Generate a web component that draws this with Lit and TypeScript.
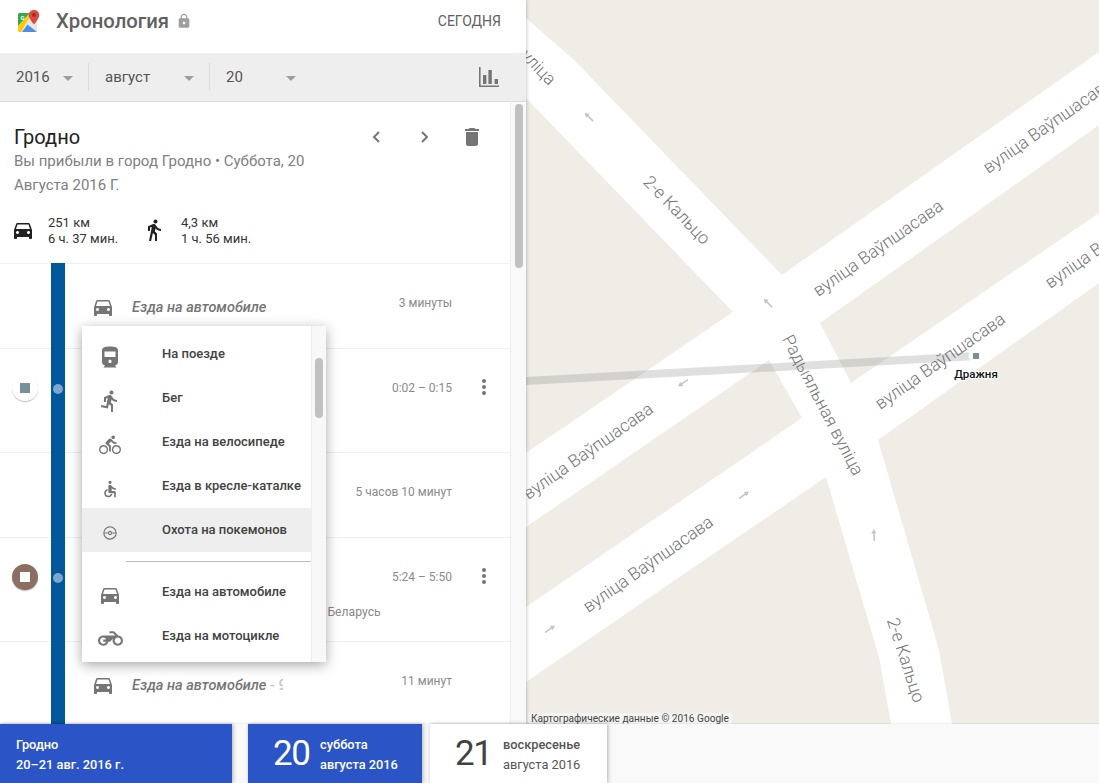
import { LitElement, html, css, svg } from 'lit';
import { customElement } from 'lit/decorators.js';

const P = {
  car: 'M18.92 6.01C18.72 5.42 18.16 5 17.5 5h-11c-.66 0-1.21.42-1.42 1.01L3 12v8c0 .55.45 1 1 1h1c.55 0 1-.45 1-1v-1h12v1c0 .55.45 1 1 1h1c.55 0 1-.45 1-1v-8l-2.08-5.99zM6.5 16c-.83 0-1.5-.67-1.5-1.5S5.67 13 6.5 13s1.5.67 1.5 1.5S7.33 16 6.5 16zm11 0c-.83 0-1.5-.67-1.5-1.5s.67-1.5 1.5-1.5 1.5.67 1.5 1.5-.67 1.5-1.5 1.5zM5 11l1.5-4.5h11L19 11H5z',
  walk: 'M13.5 5.5c1.1 0 2-.9 2-2s-.9-2-2-2-2 .9-2 2 .9 2 2 2zM9.8 8.9L7 23h2.1l1.8-8 2.1 2v6h2v-7.5l-2.1-2 .6-3C14.8 12 16.8 13 19 13v-2c-1.9 0-3.5-1-4.3-2.4l-1-1.6c-.4-.6-1-1-1.7-1-.3 0-.5.1-.8.1L6 8.3V13h2V9.6l1.8-.7',
  run: 'M13.49 5.48c1.1 0 2-.9 2-2s-.9-2-2-2-2 .9-2 2 .9 2 2 2zm-3.6 13.9l1-4.4 2.1 2v6h2v-7.5l-2.1-2 .6-3c1.3 1.5 3.3 2.5 5.5 2.5v-2c-1.9 0-3.5-1-4.3-2.4l-1-1.6c-.4-.6-1-1-1.7-1-.3 0-.5.1-.8.1l-5.2 2.2v4.7h2v-3.4l1.8-.7-1.6 8.1-4.9-1-.4 2 7 1.4z',
  bike: 'M15.5 5.5c1.1 0 2-.9 2-2s-.9-2-2-2-2 .9-2 2 .9 2 2 2zM5 12c-2.8 0-5 2.2-5 5s2.2 5 5 5 5-2.2 5-5-2.2-5-5-5zm0 8.5c-1.9 0-3.5-1.6-3.5-3.5s1.6-3.5 3.5-3.5 3.5 1.6 3.5 3.5-1.6 3.5-3.5 3.5zm5.8-10l2.4-2.4.8.8c1.3 1.3 3 2.1 5.1 2.1V9c-1.5 0-2.7-.6-3.6-1.5l-1.9-1.9c-.5-.4-1-.6-1.6-.6s-1.1.2-1.4.6L7.8 8.4c-.4.4-.6.9-.6 1.4 0 .6.2 1.1.6 1.4L11 14v5h2v-6.2l-2.2-2.3zM19 12c-2.8 0-5 2.2-5 5s2.2 5 5 5 5-2.2 5-5-2.2-5-5-5zm0 8.5c-1.9 0-3.5-1.6-3.5-3.5s1.6-3.5 3.5-3.5 3.5 1.6 3.5 3.5-1.6 3.5-3.5 3.5z',
  train: 'M12 1.5c-4.5 0-8 .6-8 4V17c0 1.9 1.3 3.2 3 3.4L5.5 22.5h13L17 20.4c1.7-.2 3-1.5 3-3.4V5.5c0-3.4-3.5-4-8-4zM6.5 6.5h11V12h-11V6.5zM12 18c-.9 0-1.6-.7-1.6-1.6s.7-1.6 1.6-1.6 1.6.7 1.6 1.6-.7 1.6-1.6 1.6z',
  wheel: 'M12 2a2 2 0 1 0 0 4 2 2 0 0 0 0-4zM19 13v-2c-1.54.02-3.09-.75-4.07-1.83l-1.29-1.43c-.17-.19-.38-.34-.61-.45-.01 0-.01-.01-.02-.01H13c-.35-.2-.75-.3-1.19-.26C10.76 7.11 10 8.04 10 9.09V15c0 1.1.9 2 2 2h5v5h2v-5.5c0-1.1-.9-2-2-2h-3v-3.45c1.29 1.07 3.25 1.94 5 1.95zm-6.17 5c-.41 1.16-1.52 2-2.83 2-1.66 0-3-1.34-3-3 0-1.31.84-2.41 2-2.83V12.1c-2.28.46-4 2.48-4 4.9 0 2.76 2.24 5 5 5 2.42 0 4.44-1.72 4.9-4h-2.07z',
  moto: 'M19.44 9.03L15.41 5H11v2h3.59l2 2H5c-2.8 0-5 2.2-5 5s2.2 5 5 5c2.46 0 4.45-1.69 4.9-4h1.65l2.77-2.77c-.21.54-.32 1.14-.32 1.77 0 2.8 2.2 5 5 5s5-2.2 5-5c0-2.65-1.97-4.77-4.56-4.97zM7.82 15C7.4 16.15 6.28 17 5 17c-1.63 0-3-1.37-3-3s1.37-3 3-3c1.28 0 2.4.85 2.82 2H5v2h2.82zM19 17c-1.66 0-3-1.34-3-3s1.34-3 3-3 3 1.34 3 3-1.34 3-3 3z',
  poke: 'M12 3a9 9 0 1 0 0 18 9 9 0 0 0 0-18zm0 1.6c3.8 0 6.9 2.9 7.4 6.6h-4.6a2.9 2.9 0 0 0-5.6 0H4.6c.5-3.7 3.6-6.6 7.4-6.6zm1.4 7.4a1.4 1.4 0 1 1-2.8 0 1.4 1.4 0 0 1 2.8 0zM12 19.4c-3.8 0-6.9-2.9-7.4-6.6h4.6a2.9 2.9 0 0 0 5.6 0h4.6c-.5 3.7-3.6 6.6-7.4 6.6z',
  trash: 'M6 19c0 1.1.9 2 2 2h8c1.1 0 2-.9 2-2V7H6v12zM19 4h-3.5l-1-1h-5l-1 1H5v2h14V4z',
  lock: 'M18 8h-1V6c0-2.76-2.24-5-5-5S7 3.24 7 6v2H6c-1.1 0-2 .9-2 2v10c0 1.1.9 2 2 2h12c1.1 0 2-.9 2-2V10c0-1.1-.9-2-2-2zm-6 9c-1.1 0-2-.9-2-2s.9-2 2-2 2 .9 2 2-.9 2-2 2zm3.1-9H8.9V6c0-1.71 1.39-3.1 3.1-3.1 1.71 0 3.1 1.39 3.1 3.1v2z',
  chart: 'M2 2h1.6v18.4H22V22H2V2zM6 10h3.4v9H6v-9zM11.4 5h3.4v14h-3.4V5zM17.6 14H21v5h-3.4v-5z',
};

const icon = (d: string, size: number, cls = '') => html`
  <svg class="ic ${cls}" width=${size} height=${size} viewBox="0 0 24 24"><path d=${d}></path></svg>
`;

const ROADS = [
  '526,18 574,60 782,275 1099,52 1099,125 820,323 851,383 1099,213 1099,283 878,440 939,650 952,724 891,724 879,657 826,477 526,682 526,607 802,418 769,360 526,527 526,453 733,312 526,98',
];

const STREET = 'вуліца Ваўпшасава';

const LABELS = [
  { t: 'вуліца', x: 553, y: 82, r: 46, a: 'end' },
  { t: '2-е Кальцо', x: 677, y: 210, r: 46, a: 'middle' },
  { t: STREET, x: 878, y: 248, r: -35, a: 'middle' },
  { t: STREET, x: 1048, y: 125, r: -35, a: 'middle' },
  { t: STREET, x: 940, y: 361, r: -35, a: 'middle' },
  { t: STREET, x: 1110, y: 240, r: -35, a: 'middle' },
  { t: STREET, x: 588, y: 451, r: -35, a: 'middle' },
  { t: STREET, x: 648, y: 564, r: -35, a: 'middle' },
  { t: 'Радыяльная вуліца', x: 823, y: 405, r: 62.5, a: 'middle' },
  { t: '2-е Кальцо', x: 906, y: 660, r: 72, a: 'middle' },
];

const ARROWS = [
  { x: 589, y: 117, r: -45 },
  { x: 768, y: 303, r: -45 },
  { x: 683, y: 383, r: -125 },
  { x: 744, y: 495, r: 55 },
  { x: 550, y: 629, r: 55 },
  { x: 874, y: 535, r: -3 },
];

@customElement('map-canvas')
class MapCanvas extends LitElement {
  static styles = css`
    :host {
      display: block;
      position: relative;
      overflow: hidden;
      background: #efede6;
    }
    svg {
      display: block;
    }
    .road {
      fill: #fff;
    }
    .label {
      font: 300 17.5px Roboto, sans-serif;
      fill: #757575;
      dominant-baseline: central;
    }
    .arrow {
      fill: #c4c4c4;
    }
    .track {
      stroke: rgba(110, 110, 110, 0.22);
      stroke-width: 8;
    }
    .stop-ring {
      fill: #fff;
    }
    .stop-dot {
      fill: #78909c;
    }
    .stop-name {
      font: 500 11.5px Roboto, sans-serif;
      fill: #111;
      text-anchor: middle;
      dominant-baseline: central;
      paint-order: stroke;
      stroke: #fff;
      stroke-width: 2px;
    }
    .credit {
      position: absolute;
      left: 2px;
      bottom: 0;
      height: 11px;
      padding: 0 3px;
      background: rgba(245, 245, 245, 0.75);
      font: 10.1px/11px Roboto, sans-serif;
      color: #444;
      white-space: nowrap;
    }
  `;

  render() {
    return html`
      <svg width="573" height="724" viewBox="526 0 573 724">
        ${ROADS.map((p) => svg`<polygon class="road" points=${p}></polygon>`)}
        ${LABELS.map(
          (l) => svg`<text class="label" text-anchor=${l.a} transform="translate(${l.x} ${l.y}) rotate(${l.r})">${l.t}</text>`,
        )}
        ${ARROWS.map(
          (a) => svg`<path class="arrow" transform="translate(${a.x} ${a.y}) rotate(${a.r})" d="M0-6l2.6 4.4H.8V6H-.8V-1.6H-2.6z"></path>`,
        )}
        <line class="track" x1="526" y1="381" x2="976" y2="356"></line>
        <circle class="stop-ring" cx="976" cy="356" r="7.5"></circle>
        <rect class="stop-dot" x="973" y="353" width="6" height="6"></rect>
        <text class="stop-name" x="976" y="374">Дражня</text>
      </svg>
      <div class="credit">Картографические данные © 2016 Google</div>
    `;
  }
}

@customElement('mode-menu')
class ModeMenu extends LitElement {
  static styles = css`
    :host {
      display: flex;
      background: #fff;
      box-shadow: 0 3px 12px rgba(0, 0, 0, 0.35);
      font-family: Roboto, sans-serif;
    }
    .list {
      width: 229px;
      padding-top: 6px;
    }
    .item {
      display: flex;
      align-items: center;
      height: 44px;
      font-size: 13px;
      font-weight: 500;
      color: #424242;
      white-space: nowrap;
    }
    .item.on {
      background: #eee;
    }
    .box {
      width: 80px;
      display: flex;
      justify-content: center;
      padding-right: 24px;
      box-sizing: border-box;
      color: #757575;
      margin-top: 5px;
    }
    .ic {
      fill: currentColor;
      display: block;
    }
    .rule {
      height: 1px;
      background: #bdbdbd;
      margin: 9px 0 8px 44px;
    }
    .track {
      width: 15px;
      background: #f8f8f8;
      border-left: 1px solid #eee;
      box-sizing: border-box;
      padding: 32px 3px 0 3px;
    }
    .thumb {
      height: 60px;
      border-radius: 4px;
      background: #c1c1c1;
    }
    .label {
      transform: translateY(-1px);
    }
  `;

  render() {
    const row = (d: string, s: number, t: string, on = false) => html`
      <div class="item ${on ? 'on' : ''}">
        <span class="box">${icon(d, s)}</span><span class="label">${t}</span>
      </div>
    `;
    return html`
      <div class="list">
        ${row(P.train, 24, 'На поезде')} ${row(P.run, 24, 'Бег')} ${row(P.bike, 22, 'Езда на велосипеде')}
        ${row(P.wheel, 20, 'Езда в кресле-каталке')} ${row(P.poke, 18, 'Охота на покемонов', true)}
        <div class="rule"></div>
        ${row(P.car, 24, 'Езда на автомобиле')} ${row(P.moto, 25, 'Езда на мотоцикле')}
      </div>
      <div class="track"><div class="thumb"></div></div>
    `;
  }
}

@customElement('app-root')
class AppRoot extends LitElement {
  static styles = css`
    :host {
      display: flex;
      flex-direction: column;
      height: 100vh;
      overflow: hidden;
      font-family: Roboto, sans-serif;
      color: #333;
    }
    .ic {
      display: block;
      fill: currentColor;
      flex: none;
    }
    .top {
      flex: 1;
      min-height: 0;
      display: flex;
    }
    map-canvas {
      flex: 1;
    }
    .panel {
      width: 526px;
      flex: none;
      display: flex;
      flex-direction: column;
      background: #fff;
      box-shadow: 0 0 4px rgba(0, 0, 0, 0.3);
      position: relative;
      z-index: 1;
    }

    .head {
      height: 53px;
      flex: none;
      display: flex;
      align-items: center;
      padding: 0 25px 11px 18px;
      box-sizing: border-box;
    }
    .logo-g {
      font: 700 6px Roboto, sans-serif;
      fill: #fff;
    }
    .head h1 {
      margin: 0 0 0 16px;
      font-size: 20.3px;
      font-weight: 500;
      color: #616161;
    }
    .lock {
      margin-left: 7px;
      color: #9e9e9e;
    }
    .today {
      margin-left: auto;
      font-size: 14px;
      color: #616161;
    }

    .bar {
      height: 49px;
      flex: none;
      display: flex;
      align-items: center;
      background: #eee;
      border-bottom: 1px solid #ddd;
      box-sizing: border-box;
      padding-right: 25px;
      font-size: 15px;
      color: #555;
    }
    .pick {
      height: 28px;
      display: flex;
      align-items: center;
      justify-content: space-between;
      box-sizing: border-box;
      padding: 0 15px 0 16px;
      border-right: 1px solid #ddd;
    }
    .pick.last {
      border-right: 0;
      padding-right: 0;
    }
    .tri {
      width: 0;
      height: 0;
      margin-top: 3px;
      border: 5px solid transparent;
      border-top: 5px solid #9e9e9e;
      border-bottom: 0;
    }
    .chart {
      margin-left: auto;
      color: #757575;
    }

    .scroll {
      flex: 1;
      min-height: 0;
      display: flex;
      overflow: hidden;
    }
    .content {
      width: 510px;
      flex: none;
      position: relative;
    }
    .sbar {
      flex: 1;
      background: #f9f9f9;
      border-left: 1px solid #eee;
      padding: 2px 3px 0 4px;
    }
    .sthumb {
      height: 164px;
      background: #c1c1c1;
      border-radius: 4px;
    }

    .sum {
      height: 161px;
      box-sizing: border-box;
      padding: 23px 0 0 14px;
    }
    .title {
      display: flex;
      align-items: center;
      height: 24px;
    }
    .title h2 {
      margin: -1px 0 0;
      font-size: 20px;
      font-weight: 400;
      color: #212121;
    }
    .tools {
      margin-left: auto;
      display: flex;
      align-items: center;
      margin-right: 26px;
      color: #757575;
    }
    .tools svg.chev {
      fill: none;
      stroke: currentColor;
      stroke-width: 2;
    }
    .tools .next {
      margin: 0 29px 0 37px;
    }
    .desc {
      width: 300px;
      font-size: 15px;
      line-height: 24px;
      color: #808080;
    }
    .stats {
      display: flex;
      margin-top: 15px;
      font-size: 13px;
      line-height: 16px;
      color: #333;
    }
    .stat {
      display: flex;
      align-items: center;
    }
    .stat .txt {
      margin: 3px 0 0 15px;
    }
    .stat.drive {
      width: 131px;
      margin-left: -3px;
    }
    .stat.drive .txt {
      margin-left: 13px;
    }
    .stat .ic {
      color: #212121;
    }

    .row {
      display: grid;
      grid-template-columns: 51px 14px 1fr;
      border-top: 1px solid #f0f0f0;
      box-sizing: border-box;
    }
    .rail {
      background: #01579b;
      margin-top: -1px;
      display: flex;
      justify-content: center;
    }
    .dot {
      width: 10px;
      height: 10px;
      border-radius: 50%;
      background: #7ba7cc;
      margin-top: 36px;
    }
    .badge {
      width: 26px;
      height: 26px;
      margin: 26px 0 0 12px;
      border-radius: 50%;
      display: flex;
      align-items: center;
      justify-content: center;
      box-shadow: 0 1px 1px rgba(0, 0, 0, 0.25);
    }
    .badge i {
      width: 10px;
      height: 10px;
      display: block;
    }
    .badge.grey i {
      background: #78909c;
    }
    .badge.brown {
      background: #8d6e63;
    }
    .badge.brown i {
      background: #fff;
    }
    .main {
      display: flex;
      align-items: flex-start;
      position: relative;
    }
    .car {
      margin: 31px 0 0 26px;
      color: #757575;
    }
    .mode {
      margin: 35px 0 0 17px;
      width: 151px;
      overflow: hidden;
      white-space: nowrap;
      font-size: 14.5px;
      line-height: 18px;
      font-style: italic;
      font-weight: 500;
      color: #757575;
    }
    .mode span {
      color: #c4c4c4;
    }
    .time {
      margin: 30px 0 0 auto;
      font-size: 12px;
      line-height: 18px;
      color: #8a8a8a;
      white-space: nowrap;
    }
    .more {
      width: 58px;
      flex: none;
      display: flex;
      flex-direction: column;
      align-items: center;
      gap: 2px;
      padding-top: 30px;
      box-sizing: border-box;
    }
    .more i {
      width: 4px;
      height: 4px;
      border-radius: 50%;
      background: #757575;
      display: block;
      transform: translateX(3px);
    }
    .place {
      position: absolute;
      left: 257px;
      top: 65px;
      font-size: 12.2px;
      line-height: 18px;
      color: #8a8a8a;
    }

    mode-menu {
      position: absolute;
      left: 82px;
      top: 224px;
      width: 244px;
      height: 336px;
    }

    .foot {
      height: 59px;
      flex: none;
      display: flex;
      background: #f9f9f9;
      position: relative;
      z-index: 2;
      box-shadow: 0 -1px 1px rgba(0, 0, 0, 0.05);
    }
    .card {
      display: flex;
      align-items: center;
      box-sizing: border-box;
      box-shadow: 1px 0 4px rgba(0, 0, 0, 0.3);
      font-size: 12.8px;
      font-weight: 500;
      line-height: 20px;
    }
    .card > div {
      margin-top: 2px;
    }
    .card.blue {
      background: #2b55c7;
      color: #fff;
    }
    .card.range {
      width: 232px;
      margin-right: 16px;
      padding-left: 16px;
    }
    .card.day {
      width: 174px;
      margin-right: 8px;
      padding-left: 25px;
    }
    .card.next {
      width: 177px;
      padding-left: 25px;
      background: #fff;
      color: #555;
    }
    .num {
      font-size: 35px;
      font-weight: 400;
      letter-spacing: -1.5px;
      margin-right: 11px;
      line-height: 1;
      width: 36px;
    }
    .next .num {
      color: #424242;
      margin-right: 12px;
    }
    .next .small {
      font-weight: 400;
    }
  `;

  private drive(h: number, time: string, label = '', tail = '') {
    return html`
      <div class="row" style="height:${h}px">
        <div></div>
        <div class="rail"></div>
        <div class="main">
          ${label
            ? html`<span class="car">${icon(P.car, 24)}</span>
                <div class="mode">${label}<span>${tail}</span></div>`
            : ''}
          <div class="time">${time}</div>
          <div class="more"></div>
        </div>
      </div>
    `;
  }

  private stop(h: number, time: string, kind: string, place = '') {
    return html`
      <div class="row" style="height:${h}px">
        <div><div class="badge ${kind}"><i></i></div></div>
        <div class="rail"><div class="dot"></div></div>
        <div class="main">
          <div class="time">${time}</div>
          <div class="more"><i></i><i></i><i></i></div>
          ${place ? html`<div class="place">${place}</div>` : ''}
        </div>
      </div>
    `;
  }

  render() {
    return html`
      <div class="top">
        <section class="panel">
          <header class="head">
            <svg width="22" height="23" viewBox="0 0 22 23">
              <rect x="0" y="3" width="19" height="19" rx="1.5" fill="#e8e6e0"></rect>
              <path d="M0 4.5A1.5 1.5 0 0 1 1.5 3H12L0 16z" fill="#34a853"></path>
              <path d="M0 16L12 3h2L3 22H1.5A1.5 1.5 0 0 1 0 20.5z" fill="#fbcb0a"></path>
              <path d="M4 22l5.5-7.5L19 22z" fill="#4a8ee8"></path>
              <path d="M16 0c-3 0-5.3 2.3-5.3 5 0 3.6 5.3 9.5 5.3 9.5s5.3-5.9 5.3-9.5c0-2.7-2.3-5-5.3-5z" fill="#dd4b3e"></path>
              <circle cx="16" cy="5" r="1.9" fill="#9b2a22"></circle>
              <text class="logo-g" x="2.5" y="10">G</text>
            </svg>
            <h1>Хронология</h1>
            <span class="lock">${icon(P.lock, 16)}</span>
            <span class="today">СЕГОДНЯ</span>
          </header>

          <div class="bar">
            <div class="pick" style="width:89px">2016<span class="tri"></span></div>
            <div class="pick" style="width:121px">август<span class="tri"></span></div>
            <div class="pick last" style="width:86px">20<span class="tri"></span></div>
            <span class="chart">${icon(P.chart, 24)}</span>
          </div>

          <div class="scroll">
            <div class="content">
              <div class="sum">
                <div class="title">
                  <h2>Гродно</h2>
                  <div class="tools">
                    <svg class="chev" width="12" height="14" viewBox="0 0 12 14"><path d="M9 2L4 7l5 5"></path></svg>
                    <svg class="chev next" width="12" height="14" viewBox="0 0 12 14"><path d="M3 2l5 5-5 5"></path></svg>
                    ${icon(P.trash, 24)}
                  </div>
                </div>
                <div class="desc">Вы прибыли в город Гродно • Суббота, 20 Августа 2016 Г.</div>
                <div class="stats">
                  <div class="stat drive">
                    ${icon(P.car, 24)}
                    <div class="txt">251 км<br />6 ч. 37 мин.</div>
                  </div>
                  <div class="stat">
                    ${icon(P.walk, 24)}
                    <div class="txt">4,3 км<br />1 ч. 56 мин.</div>
                  </div>
                </div>
              </div>

              ${this.drive(85, '3 минуты', 'Езда на автомобиле')}
              ${this.stop(104, '0:02 – 0:15', 'grey')}
              ${this.drive(85, '5 часов 10 минут')}
              ${this.stop(104, '5:24 – 5:50', 'brown', ', Беларусь')}
              ${this.drive(85, '11 минут', 'Езда на автомобиле', ' - 9 км')}

              <mode-menu></mode-menu>
            </div>
            <div class="sbar"><div class="sthumb"></div></div>
          </div>
        </section>
        <map-canvas></map-canvas>
      </div>

      <footer class="foot">
        <div class="card blue range"><div>Гродно<br />20–21 авг. 2016 г.</div></div>
        <div class="card blue day">
          <span class="num">20</span>
          <div>суббота<br />августа 2016</div>
        </div>
        <div class="card next">
          <span class="num">21</span>
          <div>воскресенье<br /><span class="small">августа 2016</span></div>
        </div>
      </footer>
    `;
  }
}
